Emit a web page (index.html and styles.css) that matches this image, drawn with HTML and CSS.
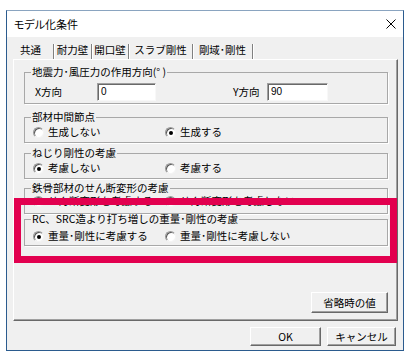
FILE: index.html
```html
<!DOCTYPE html>
<html lang="ja">
<head>
<meta charset="utf-8">
<title>モデル化条件</title>
<link rel="stylesheet" href="styles.css">
</head>
<body>
<div class="win">
  <div class="titlebar">
    <span class="title">モデル化条件</span>
    <svg class="close" width="10" height="10" viewBox="0 0 10 10"><path d="M0.5 0.5 L9.5 9.5 M9.5 0.5 L0.5 9.5" stroke="#000" stroke-width="1" fill="none"/></svg>
  </div>
  <div class="body">
    <div class="tabs">
      <span class="tab t1">共通</span><span class="tab t2">耐力壁</span><span class="tab t3">開口壁</span><span class="tab t4">スラブ剛性</span><span class="tab t5">剛域･剛性</span>
    </div>
    <div class="panel">
      <fieldset class="grp g1">
        <legend>地震力･風圧力の作用方向(° )</legend>
        <div class="row">
          <span class="lbl lx">X方向</span><span class="input ix">0</span>
          <span class="lbl ly">Y方向</span><span class="input iy">90</span>
        </div>
      </fieldset>
      <fieldset class="grp g2">
        <legend>部材中間節点</legend>
        <div class="opts">
          <span class="opt"><span class="radio"></span>生成しない</span>
          <span class="opt"><span class="radio on"></span>生成する</span>
        </div>
      </fieldset>
      <fieldset class="grp g3">
        <legend>ねじり剛性の考慮</legend>
        <div class="opts">
          <span class="opt"><span class="radio on"></span>考慮しない</span>
          <span class="opt"><span class="radio"></span>考慮する</span>
        </div>
      </fieldset>
      <fieldset class="grp g4">
        <legend>鉄骨部材のせん断変形の考慮</legend>
        <div class="opts">
          <span class="opt"><span class="radio on"></span>せん断変形を考慮する</span>
          <span class="opt"><span class="radio"></span>せん断変形を考慮しない</span>
        </div>
      </fieldset>
      <fieldset class="grp g5">
        <legend>RC、SRC造より打ち増しの重量･剛性の考慮</legend>
        <div class="opts">
          <span class="opt"><span class="radio on"></span>重量･剛性に考慮する</span>
          <span class="opt"><span class="radio"></span>重量･剛性に考慮しない</span>
        </div>
      </fieldset>
      <div class="highlight"></div>
      <div class="panel-foot"><button class="btn def">省略時の値</button></div>
    </div>
    <div class="foot">
      <button class="btn ok">OK</button><button class="btn cancel">キャンセル</button>
    </div>
  </div>
</div>
</body>
</html>
```

FILE: styles.css
```css
body {
  margin: 0;
  background: #fff;
  font-family: "Noto Sans CJK JP", sans-serif;
  font-size: 10.5px;
  line-height: 12px;
  color: #000;
}

.win {
  box-sizing: border-box;
  width: 398px;
  height: 341px;
  margin: 10px 0 0 6px;
  border: 1px solid #2b5b8e;
  border-top-color: #8aa4c0;
  background: #f0f0f0;
  display: flex;
  flex-direction: column;
}

.titlebar {
  height: 26px;
  flex: none;
  background: #fff;
  display: flex;
  align-items: center;
  justify-content: space-between;
  padding: 0 7px 0 7px;
}

.title {
  font-size: 11px;
  font-feature-settings: "palt";
}

.close { display: block; }

.body {
  flex: 1;
  padding: 0 5px 0 6px;
  display: flex;
  flex-direction: column;
}

.tabs {
  height: 22px;
  flex: none;
  display: flex;
  align-items: flex-end;
  padding-left: 7px;
}

.tab {
  height: 12px;
  padding: 0 0 3px 0;
  border-right: 1px solid #808080;
  box-shadow: 1px 0 0 #fff;
  white-space: nowrap;
  text-align: center;
}

.t1 { width: 33px; text-align: left; }
.t2 { width: 37px; }
.t3 { width: 36px; }
.t4 { width: 63px; }
.t5 { width: 59px; }

.panel {
  box-sizing: border-box;
  height: 262px;
  flex: none;
  position: relative;
  border: 1px solid;
  border-color: #fff #696969 #696969 #fff;
  box-shadow: inset -1px -1px 0 #a0a0a0;
  padding: 6px 9px 7px 10px;
  display: flex;
  flex-direction: column;
}

.grp {
  margin: 0;
  padding: 0 8px;
  min-width: 0;
  border: 1px solid #a8a8a8;
  box-shadow: 1px 1px 0 #fff;
}

.grp legend {
  padding: 0 1px;
  margin-left: -2px;
  line-height: 12px;
  white-space: nowrap;
}

.g1 { padding-top: 5px; padding-bottom: 2px; }
.g2 { margin-top: 7px; }
.g2, .g3 { padding-top: 2px; padding-bottom: 3px; }
.g3 { margin-top: 4px; }
.g4 { margin-top: 3px; padding-top: 0; padding-bottom: 5px; }
.g5 { margin-top: -1px; padding-top: 4px; padding-bottom: 2px; }

.row {
  display: flex;
  height: 18px;
  align-items: center;
}

.lbl { white-space: nowrap; }
.lx { width: 62px; padding-left: 2px; }
.ly { margin-left: 77px; width: 34px; }

.input {
  box-sizing: border-box;
  height: 18px;
  align-self: stretch;
  background: #fff;
  border: 1px solid;
  border-color: #a0a0a0 #f8f8f8 #f8f8f8 #a0a0a0;
  box-shadow: inset 1px 1px 0 #696969;
  padding: 2px 0 0 3px;
  font-family: "Liberation Sans", sans-serif;
  font-size: 10px;
  line-height: 11px;
}
.ix { width: 59px; }
.iy { width: 61px; }

.opts {
  display: flex;
  height: 14px;
  align-items: center;
}

.opt {
  display: flex;
  align-items: center;
  gap: 4px;
  white-space: nowrap;
}
.opt:first-child { width: 132px; }

.radio {
  box-sizing: border-box;
  width: 11px;
  height: 11px;
  border-radius: 50%;
  border: 1px solid;
  border-color: #9a9a9a #f4f4f4 #f4f4f4 #9a9a9a;
  background: #fff;
  box-shadow: inset 1px 1px 0 #5a5a5a;
  position: relative;
  flex: none;
}
.radio.on::after {
  content: "";
  position: absolute;
  left: 3px;
  top: 3px;
  width: 4px;
  height: 4px;
  border-radius: 50%;
  background: #000;
}

.highlight {
  position: absolute;
  left: 0;
  top: 138px;
  width: 383px;
  height: 65px;
  box-sizing: border-box;
  border: 7px solid #e2004f;
  pointer-events: none;
}

.panel-foot {
  margin-top: auto;
  display: flex;
  justify-content: flex-end;
}

.btn {
  box-sizing: border-box;
  font: inherit;
  color: #000;
  background: #f0f0f0;
  border: 1px solid;
  border-color: #fff #696969 #696969 #fff;
  box-shadow: inset -1px -1px 0 #a0a0a0;
  padding: 0;
  margin: 0;
}
.def { width: 77px; height: 21px; }

.foot {
  margin-top: 6px;
  margin-right: 2px;
  display: flex;
  justify-content: flex-end;
  gap: 6px;
}
.ok { width: 71px; height: 19px; }
.cancel { width: 69px; height: 19px; }
```
